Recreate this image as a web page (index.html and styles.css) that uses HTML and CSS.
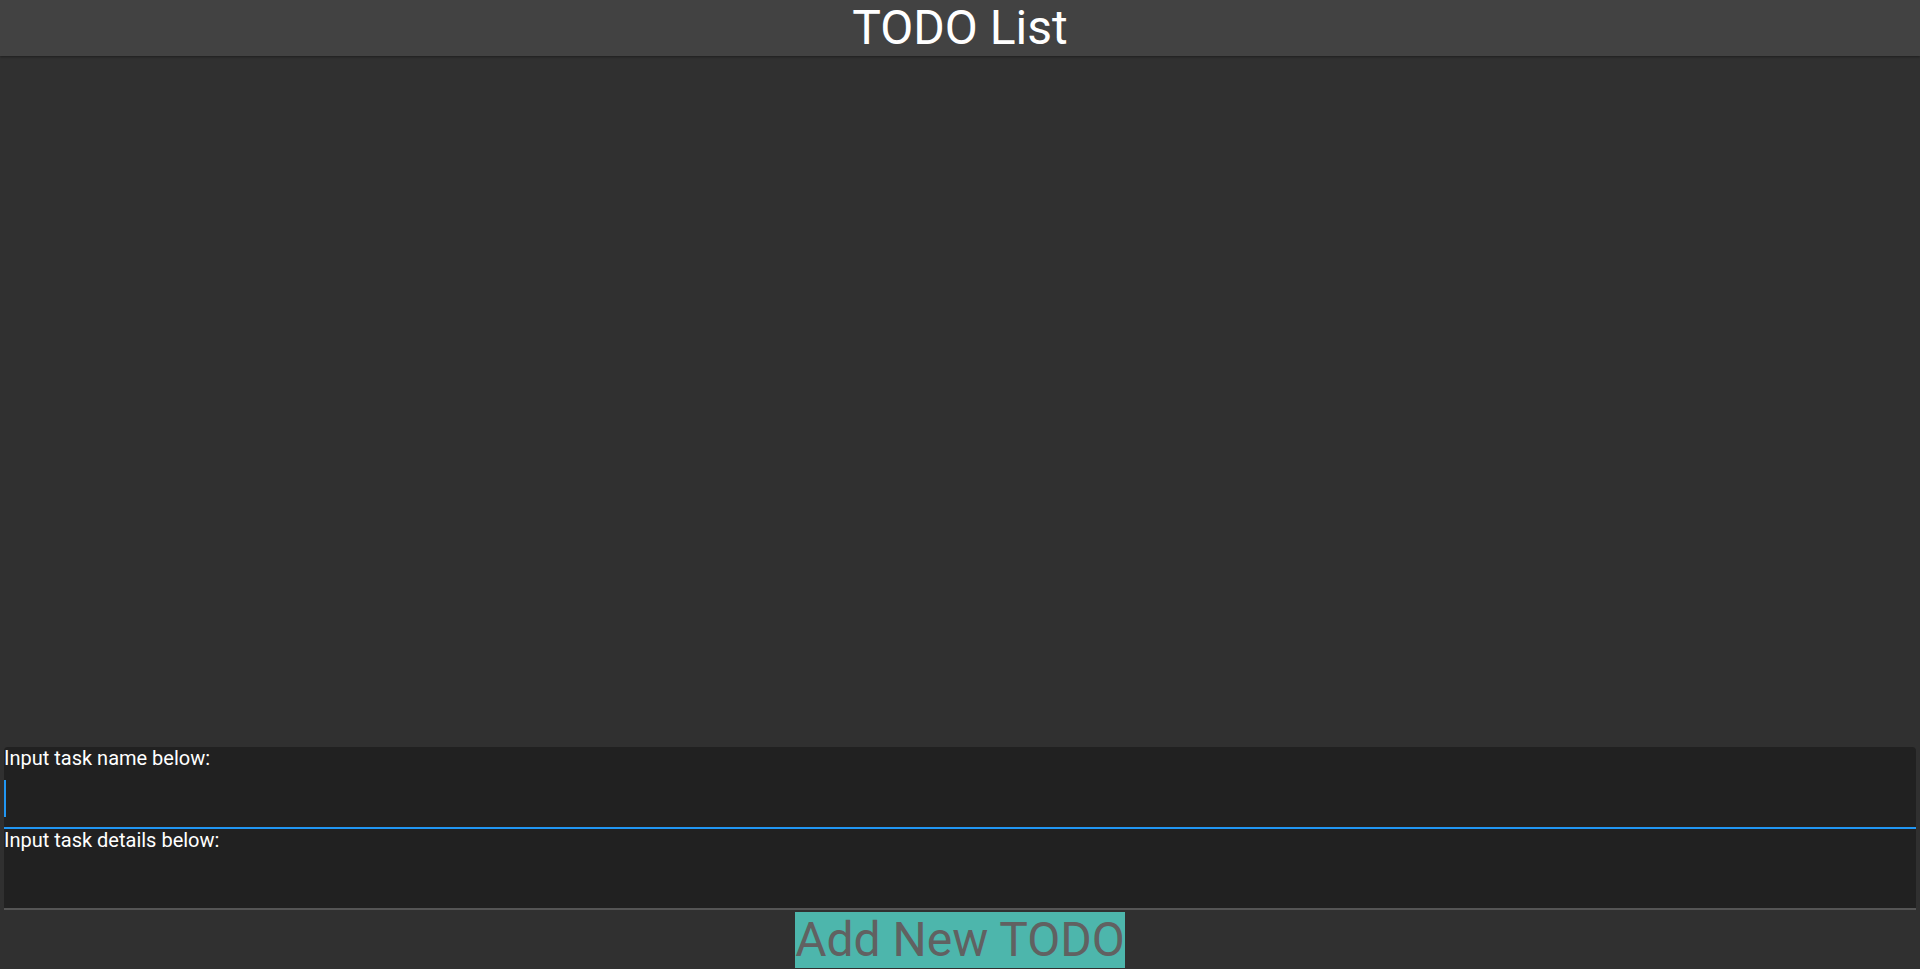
FILE: index.html
```html
<!DOCTYPE html>
<html lang="en">
<head>
<meta charset="utf-8">
<title>TODO List</title>
<link rel="stylesheet" href="styles.css">
</head>
<body>
<div class="app">
  <header class="app-header">
    <h1 class="app-title">TODO List</h1>
  </header>
  <main class="todo-list"></main>
  <form class="todo-form">
    <div class="fields">
      <label class="field field-active">
        <span class="field-label">Input task name below:</span>
        <span class="input-row">
          <span class="caret"></span>
          <input class="field-input" type="text">
        </span>
      </label>
      <label class="field">
        <span class="field-label">Input task details below:</span>
        <span class="input-row">
          <input class="field-input" type="text">
        </span>
      </label>
    </div>
    <div class="actions">
      <button class="add-button" type="button">Add New TODO</button>
    </div>
  </form>
</div>
</body>
</html>
```

FILE: styles.css
```css
html, body {
  margin: 0;
  padding: 0;
  background: #303030;
  font-family: Roboto, "Liberation Sans", Arial, sans-serif;
  overflow: hidden;
}

.app {
  display: flex;
  flex-direction: column;
  height: 100vh;
}

.app-header {
  background: #424242;
  height: 56px;
  flex: none;
  box-shadow: 0 1px 2px rgba(0, 0, 0, 0.35);
  position: relative;
  z-index: 1;
}

.app-title {
  margin: 0;
  font-size: 48px;
  font-weight: 400;
  line-height: 56px;
  color: #ffffff;
  text-align: center;
}

.todo-list {
  flex: 1;
  min-height: 0;
}

.todo-form {
  display: flex;
  flex-direction: column;
  flex: none;
  padding: 0 4px 1px 4px;
}

.fields {
  display: flex;
  flex-direction: column;
  background: #212121;
  border-radius: 4px 4px 0 0;
}

.field {
  display: flex;
  flex-direction: column;
  height: 80px;
  border-bottom: 2px solid #555555;
}

.field:last-child {
  height: 79px;
}

.field-active {
  border-bottom-color: #2196f3;
}

.field-label {
  font-size: 20px;
  line-height: 23px;
  color: #ffffff;
}

.input-row {
  flex: 1;
  display: flex;
  align-items: center;
}

.caret {
  width: 2px;
  height: 37px;
  background: #2196f3;
  flex: none;
}

.field-input {
  flex: 1;
  align-self: stretch;
  min-width: 0;
  margin: 0;
  padding: 0;
  border: none;
  outline: none;
  background: transparent;
  color: #ffffff;
  font-family: inherit;
  font-size: 32px;
  caret-color: #2196f3;
}

.actions {
  display: flex;
  justify-content: center;
  margin-top: 2px;
}

.add-button {
  margin: 0;
  padding: 0;
  border: none;
  background: #4db6ac;
  color: #616161;
  font-family: inherit;
  font-size: 48px;
  line-height: 56px;
  cursor: pointer;
}
```
